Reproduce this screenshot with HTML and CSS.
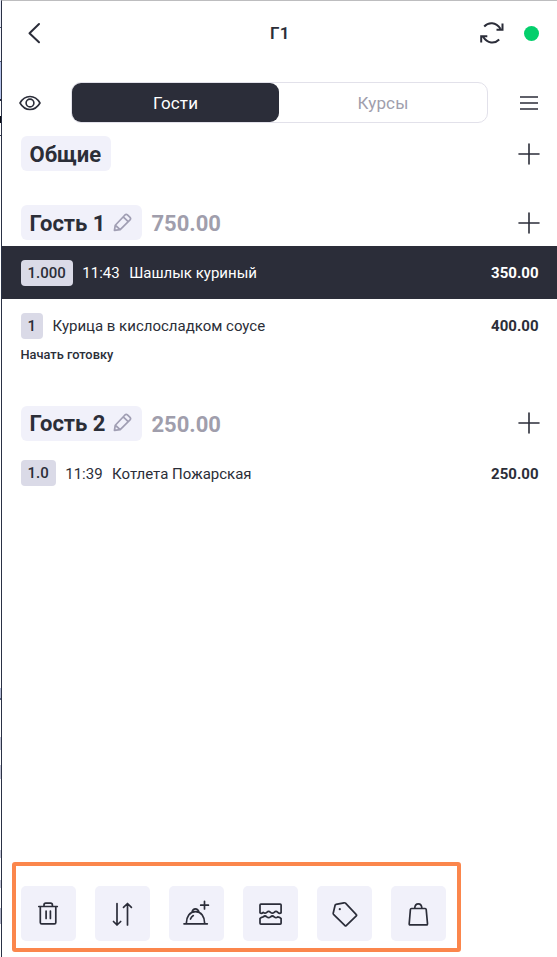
FILE: index.html
```
<!DOCTYPE html>
<html lang="ru">
<head>
<meta charset="utf-8">
<title>Г1</title>
<link rel="stylesheet" href="styles.css">
</head>
<body>
<svg class="defs" width="0" height="0">
  <symbol id="plus" viewBox="0 0 22 22"><path d="M11 1v20M1 11h20"/></symbol>
  <symbol id="pencil" viewBox="0 0 20 20"><path d="M1.500 18.300l.9-5.400L12.600 2.100q1.300-1.200 2.600 0l2.700 2.500q1.200 1.300 0 2.600L7.600 17.400zM10.800 4.100l5.200 5M2.400 12.900l5.200 4.500"/></symbol>
</svg>
<div class="screen">
  <div class="backdrop"></div>
  <main class="app">
    <header class="header">
      <svg class="back" viewBox="0 0 14 22"><path d="M12 2L2.500 11.200l9.500 9"/></svg>
      <h1 class="title">Г1</h1>
      <div class="status">
        <svg class="sync" viewBox="0 0 24 24"><path d="M4.200 5.500C8.500.9 15.800.9 20.500 7.700M22.500 2.500V8.800H16.500M19.200 18.500C14.500 23.200 7.500 22.600 3 15.800M1.200 21.500V15.200H7.300"/></svg>
        <span class="online"></span>
      </div>
    </header>

    <nav class="switcher">
      <svg class="eye" viewBox="0 0 22 16"><path d="M1 8C6 -.6 16 -.6 21 8C16 16.600 6 16.600 1 8z"/><circle cx="11" cy="8" r="3.900"/></svg>
      <div class="tabs">
        <div class="tab active">Гости</div>
        <div class="tab">Курсы</div>
      </div>
      <svg class="menu" viewBox="0 0 18 14"><path d="M.5 1h17M.5 7h17M.5 13h17"/></svg>
    </nav>

    <div class="group common">
      <div class="chip">Общие</div>
      <svg class="plus"><use href="#plus"/></svg>
    </div>

    <div class="group">
      <div class="chip">Гость 1<svg class="pencil"><use href="#pencil"/></svg></div>
      <span class="sum">750.00</span>
      <svg class="plus"><use href="#plus"/></svg>
    </div>
    <div class="item selected">
      <span class="qty">1.000</span><span class="time">11:43</span><span class="dish">Шашлык куриный</span><span class="price">350.00</span>
    </div>
    <div class="item">
      <span class="qty">1</span><span class="dish">Курица в кислосладком соусе</span><span class="price">400.00</span>
    </div>
    <div class="note">Начать готовку</div>

    <div class="group second">
      <div class="chip">Гость 2<svg class="pencil"><use href="#pencil"/></svg></div>
      <span class="sum">250.00</span>
      <svg class="plus"><use href="#plus"/></svg>
    </div>
    <div class="item last">
      <span class="qty">1.0</span><span class="time">11:39</span><span class="dish">Котлета Пожарская</span><span class="price">250.00</span>
    </div>

    <footer class="toolbar">
      <button class="tool" aria-label="Удалить"><svg viewBox="0 0 28 28"><path d="M4.800 6.500h18.500M6.300 6.500V22.500q0 1.400 1.400 1.400h12.700q1.400 0 1.400-1.400V6.500M10 6.500V5q0-1.800 1.800-1.800h4.800q1.800 0 1.800 1.800v1.500M12.100 11v7.500M16.400 11v7.500"/></svg></button>
      <button class="tool" aria-label="Переместить"><svg viewBox="0 0 28 28"><path d="M9 3.500V25M5.500 21.500L9 25l3.700-3.500M19.500 25V3.500M15.500 7.300L19.500 3.500l3.900 3.800"/></svg></button>
      <button class="tool" aria-label="Добавить блюдо"><svg viewBox="0 0 28 28"><path d="M2 23.800h23.300M4.300 23.500C4.300 16.500 7.800 11.700 13.500 11.700S22.700 16.500 22.700 23.500M10 12Q10.800 8.800 13.400 8.800T17 12M8.500 19Q9.300 16.800 11.300 15.600M22.500 1.300V9M18.700 5.200h7.700"/></svg></button>
      <button class="tool" aria-label="Разделить"><svg viewBox="0 0 28 28"><path d="M4 12.800V5q0-.9.900-.9h19.300q.9 0 .9.900V12.800Q23.500 14 21.800 12.300Q20 10.600 18.200 12.300T14.500 12.300T10.800 12.300T7.200 12.300Q5.500 14 4 12.800zM4 18.600Q5 17.200 7.200 16.800Q9 15.200 10.800 16.800T14.500 16.800T18.200 16.800T21.800 16.800Q24 17.200 25.100 18.600V23.200q0 .9-.9.900H4.900q-.9 0-.9-.9z"/></svg></button>
      <button class="tool" aria-label="Скидка"><svg viewBox="0 0 28 28"><path d="M6 4.400L14 2.800q.9-.2 1.500.4L26.300 14.600q.6.600 0 1.200L16.200 25.600q-.6.600-1.200 0L3.500 14.300q-.4-.5-.3-1L5.100 5.300q.2-.8.900-.9z"/><circle class="hole" cx="9.800" cy="9.200" r="1.100"/></svg></button>
      <button class="tool" aria-label="Пакет"><svg viewBox="0 0 28 28"><path d="M7.500 8.500H21.100Q22.100 8.500 22.200 9.500L23.500 23.700q.1 1.200-1 1.200H6.200q-1.100 0-1-1.200L6.400 9.500Q6.500 8.500 7.500 8.500zM10.700 8.300Q11 3.800 14.300 3.800T17.900 8.300"/></svg></button>
    </footer>
  </main>
</div>
</body>
</html>
```
FILE: styles.css
```
* { box-sizing: border-box; }

body {
  margin: 0;
  font-family: Roboto, "Liberation Sans", sans-serif;
  color: #2b2e38;
  background: #fff;
}

.defs { display: block; }

svg {
  fill: none;
  stroke: #2b2d39;
  stroke-width: 1.4;
  stroke-linecap: round;
  stroke-linejoin: round;
  flex: none;
}

.screen {
  display: flex;
  width: 557px;
  height: 957px;
  overflow: hidden;
}

/* sliver of the window behind the app */
.backdrop {
  width: 1px;
  background: linear-gradient(#e8ebf7 0 27px, #4d5872 27px 28px, #f5f6fc 28px 61px, #4d5872 61px 62px, #b5c2ea 62px 99px, #222638 99px 101px, #fff 101px 116px, #080a12 116px 123px, #fff 123px 135px, #34384a 135px 136px, #fff 136px 688px, #b4bbd5 688px 698px, #59647e 698px 700px, #fff 700px 737px, #c2c4d5 737px 750px, #fff 750px 765px, #c2c4d5 765px 779px, #fff 779px 850px, #c2c4d5 850px 858px, #fff 858px 880px, #c2c4d5 880px 888px, #fff 888px 908px, #aeb1c5 908px 924px, #fff 924px);
}

.app {
  display: flex;
  flex-direction: column;
  width: 556px;
  border-left: 1px solid #2a3145;
  border-top: 1px solid #bdbdbf;
}

.header {
  display: grid;
  grid-template-columns: 1fr auto 1fr;
  align-items: center;
  height: 64px;
  padding: 0 18px 0 25px;
}

.back { width: 14px; height: 22px; stroke-width: 2; }

.title {
  margin: 0;
  padding-right: 6px;
  font-size: 17px;
  font-weight: 600;
  letter-spacing: .3px;
}

.status {
  display: flex;
  justify-content: flex-end;
  align-items: center;
  gap: 20px;
}

.sync { width: 24px; height: 24px; stroke-width: 2; stroke-linecap: butt; stroke-linejoin: miter; }

.online { width: 15px; height: 15px; border-radius: 50%; background: #04cf6c; }

.switcher {
  display: flex;
  align-items: center;
  height: 41px;
  margin-top: 17px;
  padding: 0 19px 0 17px;
}

.eye { width: 22px; height: 16px; stroke-width: 1.6; }

.tabs {
  display: flex;
  width: 417px;
  height: 41px;
  margin: 0 auto 0 30px;
  border: 1px solid #e2e1ea;
  border-radius: 10px;
}

.tab {
  flex: 1;
  display: flex;
  align-items: center;
  justify-content: center;
  border-radius: 9px;
  font-size: 17px;
  letter-spacing: .15px;
  color: #a09eac;
}

.tab.active { flex: 0 0 207px; color: #fff; background: #2b2d39; }

.menu { width: 18px; height: 14px; stroke-width: 1.6; }

.group {
  display: flex;
  align-items: center;
  height: 35px;
  margin-top: 34px;
  padding: 0 17px 0 18.5px;
}

.group.common { margin-top: 13px; }
.group.second { margin-top: 41.5px; }

.chip {
  display: flex;
  align-items: center;
  gap: 8px;
  height: 35px;
  padding: 1px 10px 0 9px;
  border-radius: 6px;
  background: #f1f1fa;
  font-size: 22px;
  font-weight: 700;
  white-space: nowrap;
}

.pencil { width: 19px; height: 19px; margin-top: -2px; stroke: #a09eb3; stroke-width: 1.8; }

.sum {
  margin: 2px 0 0 9px;
  font-size: 22px;
  font-weight: 700;
  color: #a09eac;
}

.plus { width: 22px; height: 22px; margin-left: auto; stroke-width: 1.6; }

.item {
  display: flex;
  align-items: center;
  height: 53px;
  padding: 0 18.5px;
  font-size: 15px;
  white-space: nowrap;
}

.item.selected { margin-top: 6px; color: #fff; background: #2b2d39; }
.item.last { margin-top: 6px; }

.qty {
  height: 26px;
  padding: 0 7px;
  border-radius: 4px;
  background: #dadae7;
  color: #2b2e38;
  font-weight: 500;
  line-height: 26px;
}

.time { margin: 1px 0 0 9.5px; }
.dish { margin: 1px 0 0 9.5px; }
.price { margin: 1px 0 0 auto; font-weight: 700; }

.note {
  height: 18px;
  margin-top: -6px;
  padding-left: 18.5px;
  font-size: 12.800px;
  font-weight: 500;
  line-height: 18px;
}

.toolbar {
  display: flex;
  gap: 19px;
  width: 449px;
  height: 90px;
  margin: auto 0 5px 10px;
  padding: 20px 0 0 4.500px;
  border: 4px solid #fb864c;
  border-radius: 3px;
}

.tool {
  display: flex;
  align-items: center;
  justify-content: center;
  flex: none;
  width: 55px;
  height: 55px;
  padding: 0;
  border: 0;
  border-radius: 5px;
  background: #f1f1fa;
}

.tool svg { width: 28px; height: 28px; stroke-width: 1.7; }
.tool .hole { fill: #2b2d39; stroke: none; }
```
